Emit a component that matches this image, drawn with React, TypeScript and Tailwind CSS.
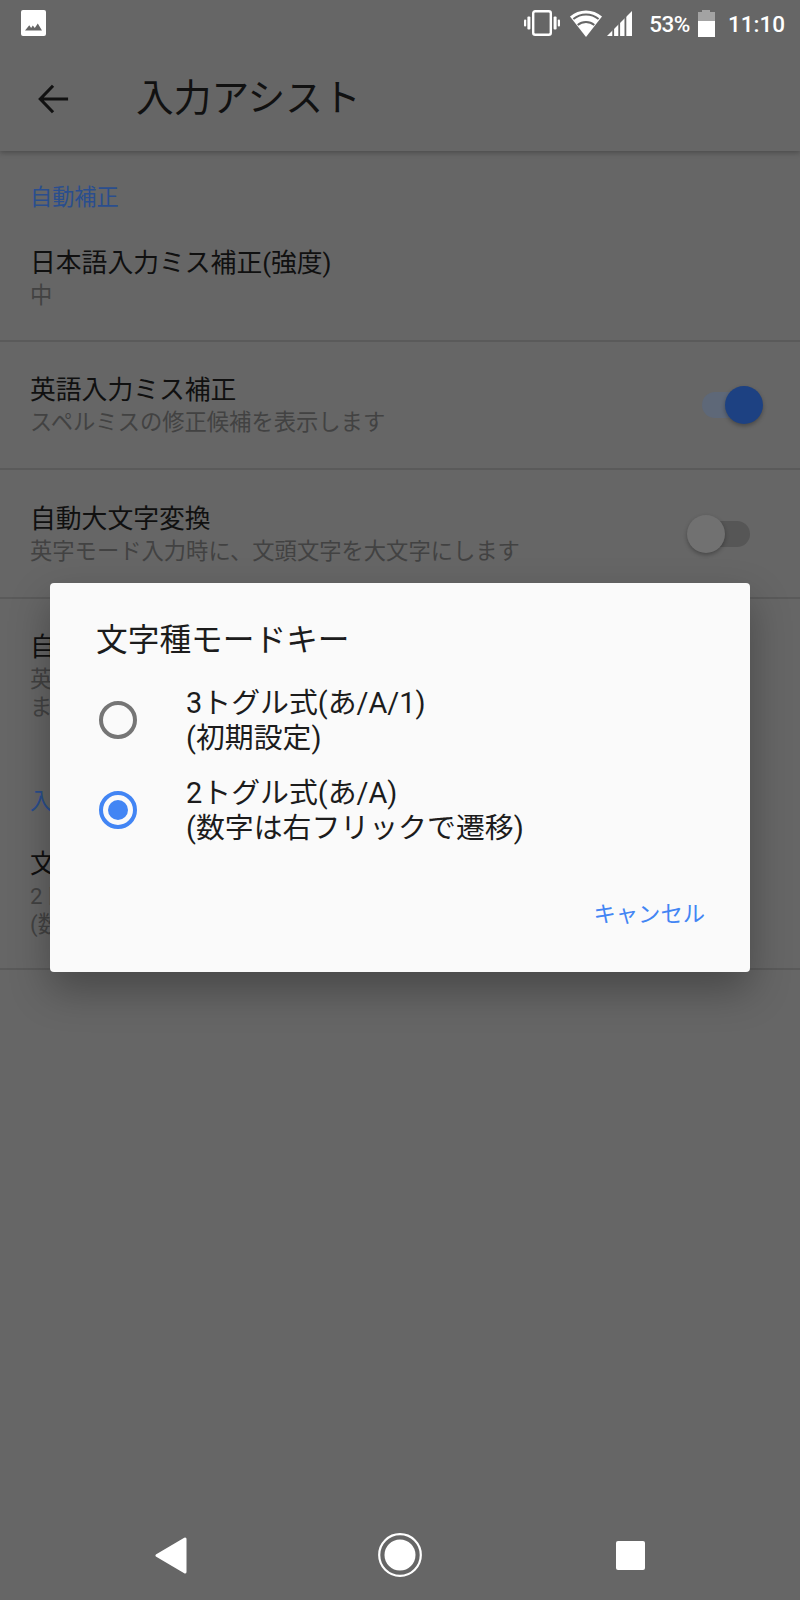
import React from "react";

function Switch({ on }: { on: boolean }) {
  return (
    <div className="relative w-[48px] h-[26px] mr-[50px] shrink-0">
      <div className={on ? "h-full rounded-full bg-[#5e6878]" : "h-full rounded-full bg-[#565656]"} />
      <div
        className={
          on
            ? "absolute top-[-6px] left-[23px] w-[38px] h-[38px] rounded-full bg-[#1d4182] shadow-[0_2px_4px_rgba(0,0,0,0.3)]"
            : "absolute top-[-6px] left-[-15px] w-[38px] h-[38px] rounded-full bg-[#717171] shadow-[0_2px_4px_rgba(0,0,0,0.3)]"
        }
      />
    </div>
  );
}

function Row({
  title,
  subs,
  sw,
  className,
}: {
  title: string;
  subs: string[];
  sw?: "on" | "off";
  className: string;
}) {
  return (
    <div className={"flex items-center pl-[30px] " + className}>
      <div className="flex-1 min-w-0 pb-[2px]">
        <div className="text-[25.8px] leading-[36px] text-[#101010] whitespace-nowrap">{title}</div>
        {subs.map((s) => (
          <div key={s} className="text-[22.3px] leading-[28px] text-[#424242] whitespace-nowrap">
            {s}
          </div>
        ))}
      </div>
      {sw && <Switch on={sw === "on"} />}
    </div>
  );
}

function Radio({ on }: { on: boolean }) {
  return (
    <div
      className={
        on
          ? "w-[38px] h-[38px] rounded-full border-[4px] border-[#4285f4] flex items-center justify-center shrink-0"
          : "w-[38px] h-[38px] rounded-full border-[4px] border-[#757575] flex items-center justify-center shrink-0"
      }
    >
      {on && <div className="w-[20px] h-[20px] rounded-full bg-[#4285f4]" />}
    </div>
  );
}

function Option({ on, lines }: { on: boolean; lines: string[] }) {
  return (
    <div className="flex items-center pl-[49px] h-[90px]">
      <Radio on={on} />
      <div className="ml-[49px] mt-[1px] text-[28.9px] leading-[35px] text-[#1c1c1c] whitespace-nowrap">
        {lines.map((l) => (
          <div key={l}>{l}</div>
        ))}
      </div>
    </div>
  );
}

export default function App() {
  return (
    <div className="relative w-[800px] h-[1600px] overflow-hidden flex flex-col bg-[#666666] font-['Roboto','Noto_Sans_CJK_JP',sans-serif]">
      {/* status bar */}
      <div className="relative z-10 h-[48px] flex items-center pl-[21px] pr-[15px] text-white shrink-0 bg-[#666666]">
        <svg width="25" height="26" viewBox="0 0 25 26" className="mt-[-2px]">
          <path
            fill="#fff"
            fillRule="evenodd"
            d="M2 0h21a2 2 0 0 1 2 2v22a2 2 0 0 1-2 2H2a2 2 0 0 1-2-2V2a2 2 0 0 1 2-2ZM4 20.5h17l-4.2-7-3 4.6-2-2.6-1.7 2.4-1.8-2.6Z"
          />
        </svg>
        <div className="flex-1" />
        <svg width="36" height="26" viewBox="0 0 36 26" className="mt-[-2px]">
          <rect x="9.2" y="1.2" width="17.6" height="23.6" rx="2" fill="none" stroke="#fff" strokeWidth="2.4" />
          <rect x="3.4" y="6.5" width="3" height="13" rx="1" fill="#fff" />
          <rect x="29.6" y="6.5" width="3" height="13" rx="1" fill="#fff" />
          <rect x="0" y="9.5" width="2.2" height="7" rx="1" fill="#fff" />
          <rect x="33.8" y="9.5" width="2.2" height="7" rx="1" fill="#fff" />
        </svg>
        <svg width="32" height="27" viewBox="0 0 32 27" className="ml-[10px] mt-[-2px]">
          <path d="M16 27 L0 6.5 A24 24 0 0 1 32 6.5 Z" fill="#fff" />
          <path d="M3.4 9 A20 20 0 0 1 28.6 9" fill="none" stroke="#666" strokeWidth="2" />
          <path d="M7.7 15 A13 13 0 0 1 24.3 15" fill="none" stroke="#666" strokeWidth="2" />
        </svg>
        <svg width="25" height="25" viewBox="0 0 25 25" className="ml-[5px] mt-[-2px]">
          <path d="M0 25 L25 0 V25 Z" fill="#fff" />
          <path d="M6.2 25V17M12.2 25V11M18.4 25V5" stroke="#666" strokeWidth="1.8" fill="none" />
        </svg>
        <span className="ml-[17px] text-[22.5px] leading-none font-medium tracking-[-0.5px]">53%</span>
        <div className="ml-[8px] w-[17px] h-[27px] flex flex-col items-center mt-[-2px]">
          <div className="w-[8px] h-[2px] bg-[#a3a3a3]" />
          <div className="w-full h-[9px] bg-[#a3a3a3]" />
          <div className="w-full flex-1 bg-white" />
        </div>
        <span className="ml-[13px] text-[22.5px] leading-none font-medium">11:10</span>
      </div>

      {/* app bar */}
      <div className="h-[103px] flex items-center shrink-0 shadow-[0_2px_5px_rgba(0,0,0,0.25)] relative">
        <svg width="31" height="30" viewBox="0 0 34 32" className="ml-[38px] mt-[-1px]">
          <path d="M33 16H3M16.5 1.5 2.5 16l14 14.5" fill="none" stroke="#111" strokeWidth="3.4" />
        </svg>
        <span className="ml-[67px] mt-[-1px] text-[37.7px] leading-none text-[#111]">入力アシスト</span>
      </div>

      {/* list */}
      <div className="flex-1 min-h-0">
        <div className="h-[66px] pl-[30px] pt-[31px] text-[22.2px] leading-[30px] text-[#2a4e8e]">自動補正</div>
        <Row
          title="日本語入力ミス補正(強度)"
          subs={["中"]}
          className="h-[125px] pb-[2px] border-b-2 border-[#5a5a5a]"
        />
        <Row
          title="英語入力ミス補正"
          subs={["スペルミスの修正候補を表示します"]}
          sw="on"
          className="h-[128px] border-b-2 border-[#5a5a5a]"
        />
        <Row
          title="自動大文字変換"
          subs={["英字モード入力時に、文頭文字を大文字にします"]}
          sw="off"
          className="h-[129px] border-b-2 border-[#5a5a5a]"
        />
        <Row title="自" subs={["英", "ま"]} className="h-[154px]" />
        <div className="h-[65px] pl-[30px] pt-[33px] text-[22.2px] leading-[30px] text-[#2a4e8e]">入</div>
        <Row
          title="文字種モードキー"
          subs={["2トグル式(あ/A)", "(数字は右フリックで遷移)"]}
          className="h-[152px] border-b-2 border-[#5a5a5a]"
        />
      </div>

      {/* navigation bar */}
      <div className="h-[96px] flex justify-center shrink-0 pt-[6px]">
        <div className="w-[230px] flex items-center justify-center">
          <svg width="32" height="37" viewBox="0 0 32 37" className="ml-[2px]">
            <path d="M30 2 V35 L2 18.5 Z" fill="#fff" stroke="#fff" strokeWidth="3" strokeLinejoin="round" />
          </svg>
        </div>
        <div className="w-[230px] flex items-center justify-center">
          <svg width="44" height="44" viewBox="0 0 44 44">
            <circle cx="22" cy="22" r="20.8" fill="none" stroke="#fff" strokeWidth="2.2" />
            <circle cx="22" cy="22" r="15.5" fill="#fff" />
          </svg>
        </div>
        <div className="w-[230px] flex items-center justify-center">
          <div className="w-[29px] h-[29px] rounded-[2px] bg-white" />
        </div>
      </div>

      {/* dialog */}
      <div className="absolute left-[50px] top-[583px] w-[700px] h-[389px] rounded-[4px] bg-[#fafafa] shadow-[0_18px_40px_rgba(0,0,0,0.3)] flex flex-col">
        <div className="pl-[46px] pt-[38px] text-[31.7px] leading-[40px] text-[#1c1c1c]">文字種モードキー</div>
        <div className="mt-[14px]">
          <Option on={false} lines={["3トグル式(あ/A/1)", "(初期設定)"]} />
          <Option on={true} lines={["2トグル式(あ/A)", "(数字は右フリックで遷移)"]} />
        </div>
        <div className="mt-[44px] pr-[45px] text-right text-[22.3px] leading-[30px] text-[#4285f4]">キャンセル</div>
      </div>
    </div>
  );
}
